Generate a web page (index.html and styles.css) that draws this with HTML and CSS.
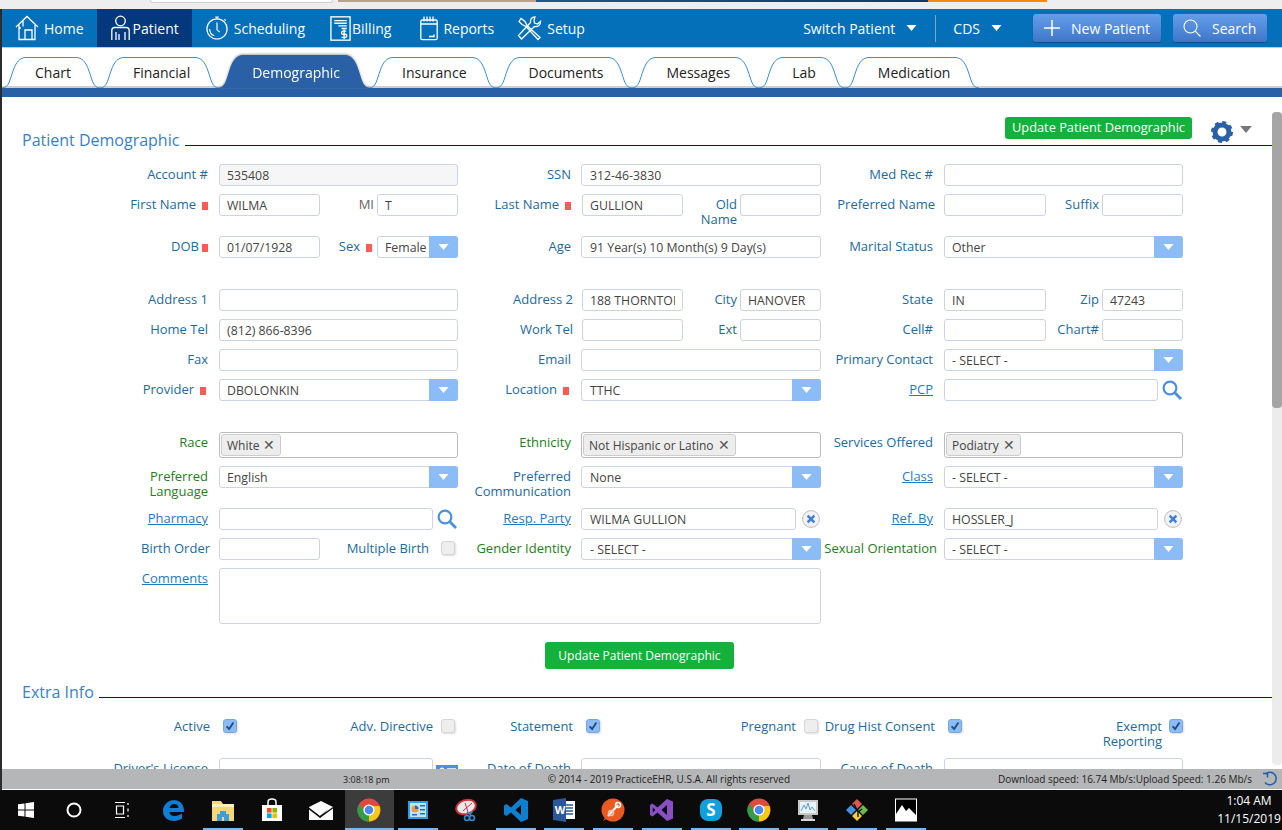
FILE: index.html
```html
<!DOCTYPE html>
<html lang="en">
<head>
<meta charset="utf-8">
<title>Patient Demographic</title>
<link rel="stylesheet" href="styles.css">
</head>
<body>
<svg class="defs" width="0" height="0" aria-hidden="true">
  <symbol id="chrome" viewBox="0 0 24 24">
    <circle cx="12" cy="12" r="11.5" fill="#dd4b3e"/>
    <path d="M12 12 2 18A11.5 11.5 0 0 1 2.2 6L7 13Z" fill="#2f9e48"/>
    <path d="M12 12 2 18A11.5 11.5 0 0 0 12 23.5L17 14Z" fill="#2f9e48"/>
    <path d="M12 12 12 23.5A11.5 11.5 0 0 0 22.5 8H13Z" fill="#fbc813"/>
    <circle cx="12" cy="12" r="5.6" fill="#fff"/>
    <circle cx="12" cy="12" r="4.3" fill="#4a8af0"/>
  </symbol>
  <symbol id="caret" viewBox="0 0 10 6"><path d="M0 0h10L5 6Z"/></symbol>
  <symbol id="search" viewBox="0 0 20 20"><circle cx="8" cy="8" r="6.4" fill="none" stroke="currentColor" stroke-width="2.2"/><path d="M12.6 12.6 19 19" stroke="currentColor" stroke-width="2.8" fill="none"/></symbol>
  <symbol id="search-thin" viewBox="0 0 18 18"><circle cx="7.500" cy="7.500" r="6.500" fill="none" stroke="currentColor" stroke-width="1.100"/><path d="M12.200 12.200 17.500 17.500" stroke="currentColor" stroke-width="1.100" fill="none"/></symbol>
  <symbol id="clear" viewBox="0 0 18 18"><circle cx="9" cy="9" r="8.4" fill="#f2f2f2" stroke="#bdbdbd"/><path d="M5.600 5.600l6.800 6.800M12.400 5.600l-6.800 6.800" stroke="#3d7fd8" stroke-width="2.400" fill="none"/></symbol>
  <symbol id="capl" viewBox="0 0 24 31" preserveAspectRatio="none"><path d="M0 31C7 31 8 22 11 14 14 5 18 .5 24 .5V31Z" fill="var(--tab-fill)"/><path d="M0 31C7 31 8 22 11 14 14 5 18 .5 24 .5" fill="none" stroke="var(--tab-line)"/></symbol>
  <symbol id="capr" viewBox="0 0 24 31" preserveAspectRatio="none"><path d="M24 31C17 31 16 22 13 14 10 5 6 .5 0 .5V31Z" fill="var(--tab-fill)"/><path d="M24 31C17 31 16 22 13 14 10 5 6 .5 0 .5" fill="none" stroke="var(--tab-line)"/></symbol>
</svg>

<div class="window">
  <div class="chrome-strip">
    <span class="strip-a"></span><span class="strip-box"></span><span class="strip-b"></span><span class="strip-photo"></span><span class="strip-navy"></span><span class="strip-orange"></span><span class="strip-c"></span>
  </div>

  <nav class="nav">
    <a class="nav-item nav-home">
      <svg class="nav-ico ico-home" viewBox="0 0 24 26"><path d="M1 12 12 1.5 23 12M4 10v14.5h16V10M10 24.5V15h7v9.5M8 6v5.5M5 14v-2"/></svg>Home</a>
    <a class="nav-item nav-patient is-current">
      <svg class="nav-ico ico-patient" viewBox="0 0 19 26"><circle cx="9.5" cy="6" r="4.8"/><path d="M.8 25V15.5q0-3 3-3h11.4q3 0 3 3V25M5 25v-8M14 25v-8M8 25v-6"/></svg>Patient</a>
    <a class="nav-item nav-sched">
      <svg class="nav-ico ico-clock" viewBox="0 0 24 26"><circle cx="12" cy="14" r="11"/><path d="M12 7v8l3 2.5M10 1h4M12 1v2M20 3.5l1.500 1.500M4 14a8 8 0 0 0 5 7.500"/></svg>Scheduling</a>
    <a class="nav-item nav-bill">
      <svg class="nav-ico ico-bill" viewBox="0 0 20 24"><rect x=".8" y=".8" width="18.400" height="22.400"/><path d="M4 4.500h12M4 7h12M8 9.500h8M11 12h5M15.500 14.500h-3q-1.500 0-1.500 1.500t1.500 1.500h2q1.500 0 1.500 1.500t-1.500 1.500h-3.500M13.500 13v9"/></svg>Billing</a>
    <a class="nav-item nav-rep">
      <svg class="nav-ico ico-rep" viewBox="0 0 18 25"><rect x=".8" y="4.500" width="16.400" height="19.700" rx="1.500"/><path d="M.8 8.500h16.400M4 1v5M7 1v5M10 1v5M13 1v5M9 21h5v-2"/></svg>Reports</a>
    <a class="nav-item nav-set">
      <svg class="nav-ico ico-set" viewBox="0 0 25 25"><path d="M2 6l2-3 4 3 2 4 13 12-2 2-12-13-4-2ZM18 1.500q-5 0-4.500 5.500L1.500 20l3 3.500L17.500 11q6 .5 6-5l-3 2.500-3-1L17 4.500Z"/></svg>Setup</a>
    <div class="nav-right">
      <a class="nav-menu">Switch Patient<svg class="nav-caret"><use href="#caret"/></svg></a>
      <span class="nav-divider"></span>
      <a class="nav-menu nav-cds">CDS<svg class="nav-caret"><use href="#caret"/></svg></a>
      <a class="nav-btn btn-new"><svg class="btn-plus" viewBox="0 0 16 16"><path d="M8 0v16M0 8h16"/></svg>New Patient</a>
      <a class="nav-btn btn-search"><svg class="btn-mag"><use href="#search-thin"/></svg>Search</a>
    </div>
  </nav>

  <div class="tabs">
    <a class="tab"><svg class="cap"><use href="#capl"/></svg><span class="tab-label">Chart</span><svg class="cap"><use href="#capr"/></svg></a>
    <a class="tab"><svg class="cap"><use href="#capl"/></svg><span class="tab-label">Financial</span><svg class="cap"><use href="#capr"/></svg></a>
    <a class="tab tab-active"><svg class="cap"><use href="#capl"/></svg><span class="tab-label">Demographic</span><svg class="cap"><use href="#capr"/></svg></a>
    <a class="tab"><svg class="cap"><use href="#capl"/></svg><span class="tab-label">Insurance</span><svg class="cap"><use href="#capr"/></svg></a>
    <a class="tab"><svg class="cap"><use href="#capl"/></svg><span class="tab-label">Documents</span><svg class="cap"><use href="#capr"/></svg></a>
    <a class="tab tab-nudge"><svg class="cap"><use href="#capl"/></svg><span class="tab-label">Messages</span><svg class="cap"><use href="#capr"/></svg></a>
    <a class="tab"><svg class="cap"><use href="#capl"/></svg><span class="tab-label">Lab</span><svg class="cap"><use href="#capr"/></svg></a>
    <a class="tab"><svg class="cap"><use href="#capl"/></svg><span class="tab-label">Medication</span><svg class="cap"><use href="#capr"/></svg></a>
  </div>
  <div class="band"></div>

  <div class="main">
    <div class="content">
      <div class="head head-top">
        <h2 class="head-title">Patient Demographic</h2>
        <div class="head-rule">
          <a class="btn-green btn-small">Update Patient Demographic</a>
          <svg class="gear" viewBox="0 0 22 22"><circle cx="11" cy="11" r="7" fill="none" stroke="#2a60a6" stroke-width="5"/><circle cx="11" cy="11" r="9.500" fill="none" stroke="#2a60a6" stroke-width="3" stroke-dasharray="3.800 3.660"/></svg>
          <svg class="gear-caret"><use href="#caret"/></svg>
        </div>
      </div>

      <div class="row">
        <label class="l">Account #</label><div class="field is-disabled"><span class="val">535408</span></div>
        <label class="l">SSN</label><div class="field"><span class="val">312-46-3830</span></div>
        <label class="l">Med Rec #</label><div class="field"></div>
      </div>

      <div class="row row-tall">
        <label class="l">First Name<i class="req req-wide"></i></label>
        <div class="split"><div class="field"><span class="val">WILMA</span></div><label class="sl sl-muted">MI</label><div class="field"><span class="val">T</span></div></div>
        <label class="l">Last Name<i class="req req-wide"></i></label>
        <div class="split split-mid"><div class="field"><span class="val">GULLION</span></div><label class="sl">Old Name</label><div class="field"></div></div>
        <label class="l l-tight">Preferred Name</label>
        <div class="split"><div class="field"></div><label class="sl">Suffix</label><div class="field"></div></div>
      </div>

      <div class="row row-end">
        <label class="l">DOB<i class="req"></i></label>
        <div class="split"><div class="field"><span class="val">01/07/1928</span></div><label class="sl sl-req">Sex<i class="req req-wide"></i></label><div class="field select"><span class="val">Female</span><span class="arrow"><svg><use href="#caret"/></svg></span></div></div>
        <label class="l">Age</label><div class="field"><span class="val">91 Year(s) 10 Month(s) 9 Day(s)</span></div>
        <label class="l">Marital Status</label><div class="field select"><span class="val">Other</span><span class="arrow"><svg><use href="#caret"/></svg></span></div>
      </div>

      <div class="row">
        <label class="l">Address 1</label><div class="field"></div>
        <label class="l l-tight">Address 2</label>
        <div class="split split-mid"><div class="field"><span class="val">188 THORNTON</span></div><label class="sl">City</label><div class="field"><span class="val">HANOVER</span></div></div>
        <label class="l">State</label>
        <div class="split"><div class="field"><span class="val">IN</span></div><label class="sl">Zip</label><div class="field"><span class="val">47243</span></div></div>
      </div>

      <div class="row">
        <label class="l">Home Tel</label><div class="field"><span class="val">(812) 866-8396</span></div>
        <label class="l l-tight">Work Tel</label>
        <div class="split split-mid"><div class="field"></div><label class="sl">Ext</label><div class="field"></div></div>
        <label class="l">Cell#</label>
        <div class="split"><div class="field"></div><label class="sl">Chart#</label><div class="field"></div></div>
      </div>

      <div class="row">
        <label class="l">Fax</label><div class="field"></div>
        <label class="l">Email</label><div class="field"></div>
        <label class="l">Primary Contact</label><div class="field select"><span class="val">- SELECT -</span><span class="arrow"><svg><use href="#caret"/></svg></span></div>
      </div>

      <div class="row row-end">
        <label class="l">Provider<i class="req req-wide req-in"></i></label><div class="field select"><span class="val">DBOLONKIN</span><span class="arrow"><svg><use href="#caret"/></svg></span></div>
        <label class="l">Location<i class="req req-wide req-in"></i></label><div class="field select"><span class="val">TTHC</span><span class="arrow"><svg><use href="#caret"/></svg></span></div>
        <label class="l"><a class="lnk">PCP</a></label>
        <div class="with-action"><div class="field"></div><svg class="act act-search"><use href="#search"/></svg></div>
      </div>

      <div class="row">
        <label class="l green">Race</label><div class="field multi"><span class="tag">White<span class="tag-x">✕</span></span></div>
        <label class="l green">Ethnicity</label><div class="field multi"><span class="tag">Not Hispanic or Latino<span class="tag-x">✕</span></span></div>
        <label class="l">Services Offered</label><div class="field multi"><span class="tag">Podiatry<span class="tag-x">✕</span></span></div>
      </div>

      <div class="row row-tall">
        <label class="l green">Preferred<br>Language</label><div class="field select"><span class="val">English</span><span class="arrow"><svg><use href="#caret"/></svg></span></div>
        <label class="l">Preferred<br>Communication</label><div class="field select"><span class="val">None</span><span class="arrow"><svg><use href="#caret"/></svg></span></div>
        <label class="l"><a class="lnk">Class</a></label><div class="field select"><span class="val">- SELECT -</span><span class="arrow"><svg><use href="#caret"/></svg></span></div>
      </div>

      <div class="row">
        <label class="l"><a class="lnk">Pharmacy</a></label>
        <div class="with-action"><div class="field"></div><svg class="act act-search"><use href="#search"/></svg></div>
        <label class="l"><a class="lnk">Resp. Party</a></label>
        <div class="with-action"><div class="field"><span class="val">WILMA GULLION</span></div><svg class="act act-clear"><use href="#clear"/></svg></div>
        <label class="l"><a class="lnk">Ref. By</a></label>
        <div class="with-action"><div class="field"><span class="val">HOSSLER_J</span></div><svg class="act act-clear"><use href="#clear"/></svg></div>
      </div>

      <div class="row">
        <label class="l l-tight">Birth Order</label>
        <div class="split split-check"><div class="field"></div><label class="sl">Multiple Birth</label><span class="check"></span></div>
        <label class="l green">Gender Identity</label><div class="field select"><span class="val">- SELECT -</span><span class="arrow"><svg><use href="#caret"/></svg></span></div>
        <label class="l green l-flush">Sexual Orientation</label><div class="field select"><span class="val">- SELECT -</span><span class="arrow"><svg><use href="#caret"/></svg></span></div>
      </div>

      <div class="row row-last">
        <label class="l"><a class="lnk">Comments</a></label>
        <div class="field textarea"></div>
      </div>

      <div class="actions"><a class="btn-green btn-big">Update Patient Demographic</a></div>

      <div class="head head-extra">
        <h2 class="head-title">Extra Info</h2>
        <div class="head-rule"></div>
      </div>

      <div class="row row-check">
        <label class="l l-check">Active</label>
        <div class="split-flags"><span class="check is-on"><svg viewBox="0 0 14 14"><path d="M3 7.500 6 10.500 11 3"/></svg></span><label class="sl">Adv. Directive</label><span class="check"></span></div>
        <label class="l l-check">Statement</label>
        <div class="split-flags"><span class="check is-on"><svg viewBox="0 0 14 14"><path d="M3 7.500 6 10.500 11 3"/></svg></span><label class="sl">Pregnant</label><span class="check"></span></div>
        <label class="l l-check">Drug Hist Consent</label>
        <div class="split-flags flags-end"><span class="check is-on"><svg viewBox="0 0 14 14"><path d="M3 7.500 6 10.500 11 3"/></svg></span><label class="sl">Exempt<br>Reporting</label><span class="check is-on"><svg viewBox="0 0 14 14"><path d="M3 7.500 6 10.500 11 3"/></svg></span></div>
      </div>

      <div class="row">
        <label class="l">Driver's License</label>
        <div class="with-action"><div class="field"></div><svg class="act act-id" viewBox="0 0 22 14"><rect width="22" height="14" fill="#4a90e2"/><circle cx="6" cy="5" r="2.500" fill="#fff"/><path d="M11 4h9M11 8h9" stroke="#fff" stroke-width="1.500"/></svg></div>
        <label class="l">Date of Death</label><div class="field"></div>
        <label class="l">Cause of Death</label><div class="field"></div>
      </div>
    </div>
    <div class="scrollbar"><div class="scroll-thumb"></div></div>
  </div>

  <footer class="status">
    <span class="st-time">3:08:18 pm</span>
    <span class="st-copy">© 2014 - 2019 PracticeEHR, U.S.A. All rights reserved</span>
    <span class="st-speed">Download speed: 16.74 Mb/s:Upload Speed: 1.26 Mb/s</span>
    <svg class="st-refresh" viewBox="0 0 16 16"><path d="M3.500 3A6.300 6.300 0 1 1 3 11.500"/><path d="M1 2.500h4.500V6.500" /></svg>
  </footer>
</div>

<div class="taskbar">
  <div class="tb-sys">
    <span class="tb-item"><svg viewBox="0 0 16 16" class="tb-16"><path d="M0 2.300 6.500 1.400V7.500H0ZM7.500 1.200 16 0V7.500H7.500ZM0 8.500H6.500V14.600L0 13.700ZM7.500 8.500H16V16L7.500 14.800Z" fill="#fff"/></svg></span>
    <span class="tb-item"><svg viewBox="0 0 16 16" class="tb-16"><circle cx="8" cy="8" r="6.500" fill="none" stroke="#fff" stroke-width="2"/></svg></span>
    <span class="tb-item"><svg viewBox="0 0 16 16" class="tb-16"><path d="M1 .5h10M1 15.500h10M2.500 4h7v8h-7ZM14 1v2M14 6.500v3M14 13v2" fill="none" stroke="#fff" stroke-width="1.200"/></svg></span>
  </div>
  <div class="tb-apps">
    <span class="tb-item"><svg viewBox="0 0 24 24" class="tb-24"><path d="M12.500 2C5 2 1 8 1 13c0 7 6 10 11 10 3 0 6-1 8-2.500v-5c-2 1.500-5 2.500-7.500 2.500-3 0-5-1.500-5-4h14.500c.7-7-4-12-10-12ZM7.500 10c.5-2.500 2.300-4 5-4 2.500 0 4 1.500 4 4Z" fill="#0d7fd6"/></svg></span>
    <span class="tb-item is-run"><svg viewBox="0 0 24 24" class="tb-24"><path d="M1 3h9l2 3h11v17H1Z" fill="#f6d777"/><path d="M1 6h22v3H1Z" fill="#fff2b8"/><path d="M6 23v-7h3v-3h6v3h3v7h-5v-4h-2v4Z" fill="#3aa0dc"/></svg></span>
    <span class="tb-item"><svg viewBox="0 0 24 24" class="tb-24"><path d="M2 7h20v16H2Z" fill="#fff"/><path d="M8 8V4q0-3 4-3t4 3v4" fill="none" stroke="#fff" stroke-width="1.500"/><path d="M7 10h4.600v4.600H7Z" fill="#f25022"/><path d="M12.400 10H17v4.600h-4.600Z" fill="#7fba00"/><path d="M7 15.400h4.600V20H7Z" fill="#00a4ef"/><path d="M12.400 15.400H17V20h-4.600Z" fill="#ffb900"/></svg></span>
    <span class="tb-item"><svg viewBox="0 0 24 24" class="tb-24"><path d="M0 9 12 3l12 6v13H0Z" fill="#fff"/><path d="M0 9.500 11 18 19 11 13 17 11 20 0 11.500Z" fill="#0b0b0b"/><path d="M11 18 24 9v1.500L11 20Z" fill="#0b0b0b"/></svg></span>
    <span class="tb-item is-run is-active"><svg class="tb-24"><use href="#chrome"/></svg></span>
    <span class="tb-item is-run"><svg viewBox="0 0 24 24" class="tb-24"><path d="M2 3h20v18H2Z" fill="#2e9fe0"/><path d="M4 5h16v14H4Z" fill="#bfe4f7"/><circle cx="9" cy="11" r="3.500" fill="#f0a020"/><path d="M9 11V7.500a3.500 3.500 0 0 1 3.500 3.500Z" fill="#1f6fb8"/><path d="M14 7h5v1.500h-5ZM14 11h5v1.500h-5ZM14 15h5v1.500h-5ZM6 16h5v1.500H6Z" fill="#1f6fb8"/></svg></span>
    <span class="tb-item"><svg viewBox="0 0 24 24" class="tb-24"><ellipse cx="11" cy="9" rx="10" ry="7" fill="#e9e9e9" stroke="#c9333a" stroke-width="2" transform="rotate(-18 11 9)"/><path d="M10 5l3 9M17 5 8 13" stroke="#c9333a" stroke-width="1" fill="none"/><path d="M12 14l4 3M17 13l-2 4" stroke="#2f8fd8" stroke-width="1.500" fill="none"/><circle cx="17" cy="20" r="2.500" fill="none" stroke="#2f8fd8" stroke-width="1.500"/><circle cx="12" cy="20" r="2.500" fill="none" stroke="#2f8fd8" stroke-width="1.500"/></svg></span>
    <span class="tb-item is-run"><svg viewBox="0 0 24 24" class="tb-24"><path d="M17 0 24 3v18l-7 3-10-9.500L2.500 18 0 16.500v-9L2.500 6 7 9.500ZM17 7l-5.500 5 5.500 5Z" fill="#0f7fd0"/></svg></span>
    <span class="tb-item is-run"><svg viewBox="0 0 24 24" class="tb-24"><path d="M8 3h15v18H8Z" fill="#fff"/><path d="M14 7h7M14 10h7M14 13h7M14 16h7" stroke="#2b579a" stroke-width="1.500"/><path d="M1 2l13-2v24L1 22Z" fill="#2b579a"/><text x="2.800" y="16" class="tb-word">W</text></svg></span>
    <span class="tb-item is-run"><svg viewBox="0 0 24 24" class="tb-24"><circle cx="12" cy="12" r="11.500" fill="#ea5a20"/><path d="M2 23l3-5 2 2Z" fill="#ea5a20"/><path d="M7 18 17 7" stroke="#fff" stroke-width="2"/><circle cx="17" cy="7" r="2.500" fill="none" stroke="#fff" stroke-width="1.500"/><circle cx="10" cy="15" r="2.500" fill="none" stroke="#f6c7ae" stroke-width="1.500"/></svg></span>
    <span class="tb-item is-run"><svg viewBox="0 0 24 24" class="tb-24"><path d="M17 1 23 3.500v17L17 23 7.500 14.500 2.500 18.500 0 17V7l2.500-1.500 5 4ZM17 7l-5.500 5 5.500 5ZM2.800 9.500v5L5.300 12Z" fill="#8a4fc4"/></svg></span>
    <span class="tb-item is-run"><svg viewBox="0 0 24 24" class="tb-24"><rect x="1" y="1" width="22" height="22" rx="8" fill="#129fdd"/><text x="12" y="18" class="tb-skype">S</text></svg></span>
    <span class="tb-item is-run"><svg class="tb-24"><use href="#chrome"/></svg></span>
    <span class="tb-item is-run"><svg viewBox="0 0 24 24" class="tb-24"><path d="M2 2h20v15H2Z" fill="#c8c8c8"/><path d="M4 4h16v11H4Z" fill="#e8f2f8"/><path d="M5 13l3-6 2 4 2-6 2 7 2-3 3 4" fill="none" stroke="#5aa0d8"/><path d="M8 17h8l1 4H7Z" fill="#9a9a9a"/><path d="M5 21h14v2H5Z" fill="#d6d6d6"/></svg></span>
    <span class="tb-item is-run"><svg viewBox="0 0 24 24" class="tb-24"><path d="M12 1 17 6 12 11 7 6Z" fill="#e2574c"/><path d="M6 7l5 5-5 5-5-5Z" fill="#4a90e2"/><path d="M18 7l5 5-5 5-5-5Z" fill="#6cbb4a"/><path d="M12 13l5 5-5 5-5-5Z" fill="#f4d03f"/><path d="M9 6l4 8 0 5M13 14l4-3" stroke="#111" stroke-width="1.400" fill="none"/></svg></span>
    <span class="tb-item is-run"><svg viewBox="0 0 22 24" class="tb-24"><rect x=".5" y="1" width="21" height="22" fill="#000" stroke="#fff"/><path d="M1 16 7 7l4 6 3-3 7 7v6H1Z" fill="#fff"/></svg></span>
  </div>
  <div class="tb-clock"><span>1:04 AM</span><span>11/15/2019</span></div>
</div>
</body>
</html>
```

FILE: styles.css
```css
* { box-sizing: border-box; }
html, body { margin: 0; height: 100%; }
body {
  width: 1282px; height: 830px; overflow: hidden;
  font-family: "Open Sans", "Liberation Sans", sans-serif;
  font-size: 13px; color: #444; background: #0b0b0b;
  display: flex; flex-direction: column;
}
a { cursor: pointer; }
.defs { display: block; height: 0; }

.window {
  height: 790px; flex: none; display: flex; flex-direction: column;
  padding-left: 2px; background: #2c2c2c;
}

/* leftover of the browser chrome */
.chrome-strip { height: 9px; flex: none; background: #eeeeef; display: flex; align-items: flex-start; margin-left: -2px; }
.chrome-strip span { display: block; height: 2px; }
.strip-a { width: 150px; }
.strip-box { width: 183px; height: 3px !important; background: #fff; border: 1px solid #d0d0d0; border-top: 0; border-radius: 0 0 4px 4px; }
.strip-b { width: 5px; }
.strip-photo { width: 198px; background: #b9a38d; }
.strip-navy { width: 392px; background: linear-gradient(90deg, #1b5a8a, #0d3a66); }
.strip-orange { width: 119px; background: #f58a0b; }
.strip-c { flex: 1; }

/* nav */
.nav {
  height: 39px; flex: none; display: flex; background: #0370b9;
  border-bottom: 1px solid #c9c9c9; color: #fff; font-size: 14px;
}
.nav-item { display: flex; align-items: center; gap: 5px; padding: 0 13px; color: #fff; }
.is-current { background: #03397c; }
.nav-ico { fill: none; stroke: #fff; stroke-width: 1.300; height: 26px; flex: none; }
.ico-home { width: 24px; }
.ico-patient { width: 19px; margin-left: 1px; margin-right: -2px; }
.nav-sched { padding-left: 14px; }
.ico-clock { width: 22px; margin-right: 1px; }
.nav-bill { padding-left: 12px; gap: 1px; }
.ico-bill { width: 21px; height: 25px; }
.nav-rep { padding-left: 16px; }
.ico-rep { width: 18px; }
.nav-set { padding-left: 10px; }
.ico-set { width: 25px; }
.nav-right { margin-left: auto; display: flex; align-items: center; padding-right: 15px; }
.nav-menu { display: flex; align-items: center; }
.nav-caret { width: 11px; height: 6px; margin-left: 11px; fill: #fff; }
.nav-divider { width: 1px; height: 27px; background: #6fa9d4; margin: 0 17px 0 18px; }
.nav-cds { margin-right: 31px; }
.nav-btn {
  height: 28px; display: flex; align-items: center; border-radius: 3px;
  background: linear-gradient(#659fea, #3d76c8); box-shadow: 0 1px 1px #0b4f8a; color: #fff;
}
.btn-new { width: 128px; padding-left: 11px; margin-right: 12px; }
.btn-plus { width: 16px; height: 16px; stroke: #fff; stroke-width: 1.500; fill: none; margin-right: 11px; }
.btn-search { width: 94px; padding-left: 10px; }
.btn-mag { width: 18px; height: 18px; color: #fff; margin-right: 11px; }

/* tabs */
.tabs {
  --tab-line: #3b8ed0;
  --tab-fill: transparent;
  height: 40px; flex: none; padding-top: 9px; display: flex; background: #fff;
  box-shadow: inset 0 -2px 0 #cfcfcf; font-size: 14px; color: #222;
}
.tab { display: flex; height: 31px; }
.cap { width: 24px; height: 100%; flex: none; }
.tab-label {
  color: #222; line-height: 30px; padding: 0 5px 0 9px;
  border-top: 1px solid var(--tab-line);
}
.tab-nudge .tab-label { padding-left: 10px; }
.tab-active { --tab-line: #2a60a6; --tab-fill: #2a60a6; height: 33px; margin-top: -2px; filter: drop-shadow(0 -1px 1px #aaa); }
.tab-active .tab-label { background: #2a60a6; color: #fff; line-height: 33px; padding: 0 5px 0 9px; }
.band { height: 9px; flex: none; background: #2a60a6; }

/* main */
.main { flex: 1; min-height: 0; display: flex; background: #fff; overflow: hidden; }
.content { flex: 1; min-width: 0; overflow: hidden; }
.scrollbar { width: 10px; flex: none; margin-top: 15px; height: 653px; border-radius: 4px; background: #ececec; }
.scroll-thumb { height: 296px; background: #a5a5a5; border-radius: 4px; }

.head { display: flex; padding-left: 20px; }
.head-top { margin-top: 20px; margin-bottom: 18px; }
.head-extra { margin-top: 12px; margin-bottom: 17px; }
.head-title {
  margin: 0 5.500px -5px 0; font-size: 16px; line-height: 22px; font-weight: 400; color: #3a7fc8;
  align-self: flex-end; white-space: nowrap;
}
.head-rule { flex: 1; display: flex; align-items: center; justify-content: flex-end; border-bottom: 1px solid #0000cd; padding-bottom: 6px; min-height: 1px; }
.btn-green { background: #14b13c; color: #fff; border-radius: 3px; display: flex; align-items: center; justify-content: center; padding-bottom: 1px; }
.btn-small { width: 187px; height: 22px; font-size: 12.800px; padding-bottom: 2px; }
.gear { width: 22px; height: 22px; margin-left: 19px; margin-top: 4px; margin-bottom: -4px; }
.gear-caret { width: 12px; height: 7px; margin: 3px 20px 0 7px; fill: #777; }

/* form */
.row {
  display: grid; grid-template-columns: 123px 239px 123px 240px 123px 239px;
  padding-left: 94px; margin-bottom: 8px; align-items: start; line-height: 15px;
}
.row-tall { min-height: 34px; }
.row-end { margin-bottom: 31px; }
.row-last { margin-bottom: 18px; }
.row-check { min-height: 35px; }
.l { display: block; text-align: right; padding: 3px 10px 0 0; color: #1c6a9e; white-space: nowrap; }
.row > .l:nth-child(4n+1) { margin-right: 1px; }
.l-tight { padding-right: 8px; }
.l-flush { padding-right: 6px; }
.l-check { padding: 4px 9px 0 0; }
.row > .l-check:nth-child(4n+1) { margin-right: 0; }
.row > .l-check:nth-child(3) { padding-right: 8px; }
.green { color: #1f7d1a; }
.lnk { color: #1f7ac0; text-decoration: underline; }
.req { display: inline-block; width: 6px; height: 8px; background: #ff5a55; margin-left: 3px; vertical-align: -0.5px; }
.req-wide { margin-left: 6px; }
.req-in { margin-right: 2px; }

.field {
  height: 22px; display: flex; align-items: center; background: #fff;
  border: 1px solid #ccd3e2; border-radius: 3px; padding-left: 7px; min-width: 0;
  color: #444; white-space: nowrap; font-size: 12.300px;
}
.row > .field:nth-child(4) { padding-left: 8px; }
.val { flex: 1; min-width: 0; overflow: hidden; margin-right: 7px; }
.is-disabled { background: #f6f6f6; }
.select { padding-right: 0; }
.arrow { width: 29px; height: 22px; margin: 0 -1px 0 0; flex: none; background: #8cbcf5; display: flex; align-items: center; justify-content: center; border-radius: 0 3px 3px 0; }
.arrow svg { width: 11px; height: 6px; fill: #fff; }
.select .val { margin-right: 0; }
.multi { height: 26px; border-color: #bbb; font-size: 12px; }
.row > .multi:nth-child(n) { padding-left: 1px; }
.tag {
  height: 22px; display: flex; align-items: center; padding: 0 5px; background: #ededed;
  border: 1px solid #ccc; border-radius: 3px; color: #444;
}
.tag-x { margin-left: 4px; font-size: 14px; line-height: 14px; color: #555; }
.textarea { grid-column: 2 / span 3; height: 56px; }

.split { display: grid; grid-template-columns: 101px 1fr 81px; }
.row > .split:nth-child(6) { grid-template-columns: 102px 1fr 81px; }
.split-mid { margin-left: 1px; }
.sl { display: block; text-align: right; padding: 3px 3px 0 0; color: #1c6a9e; white-space: normal; }
.sl-muted { color: #666; }
.sl-req { padding-right: 5px; }
.split-check { grid-template-columns: 101px 1fr 14px; margin-right: 3px; }
.split-check .sl { padding-right: 12px; white-space: nowrap; }
.split-check .check { margin-top: 3px; }
.split-flags { display: grid; grid-template-columns: 14px 1fr 14px; padding: 4px 3px 0 4px; }
.row > .split-flags:nth-child(4) { padding-left: 5px; }
.split-flags .sl { padding: 0 8px 0 0; white-space: nowrap; }
.flags-end { padding-right: 0; }
.flags-end .sl { padding-right: 7px; }

.check { display: block; width: 14px; height: 14px; border-radius: 3px; background: #eee; border: 1px solid #d6d6d6; box-shadow: 1px 1px 2px #ddd; }
.check svg { display: block; width: 12px; height: 12px; fill: none; stroke: #1d4f80; stroke-width: 2.200; }
.is-on { background: #8cbcf5; border-color: #7ba7d8; }

.with-action { display: flex; align-items: flex-start; justify-content: space-between; }
.with-action .field { width: 214px; }
.row > .with-action:nth-child(4) .field { width: 215px; padding-left: 8px; }
.act { flex: none; }
.act-search { width: 20px; height: 20px; color: #4a90e2; margin-top: 1px; margin-right: 1px; }
.act-clear { width: 18px; height: 18px; margin-top: 2px; margin-right: 1px; }
.act-id { width: 22px; height: 14px; margin-top: 7px; }
.actions { display: flex; justify-content: center; padding-left: 5px; }
.btn-big { width: 189px; height: 27px; font-size: 12px; }

/* status */
.status {
  height: 21px; flex: none; display: flex; align-items: center; background: #b5b6b7;
  border-bottom: 1px solid #fff; padding-left: 341px; font-size: 10px; color: #222;
}
.st-time { font-size: 9px; }
.st-copy { margin-left: 158px; }
.st-speed { margin-left: auto; }
.st-refresh { width: 16px; height: 16px; margin: 0 4px 0 10px; fill: none; stroke: #1f5fa8; stroke-width: 1.500; }

/* taskbar */
.taskbar { height: 40px; flex: none; display: flex; color: #fff; background: #0b0b0b; padding-left: 2px; }
.tb-sys { display: flex; width: 148px; }
.tb-sys .tb-item { width: 48px; }
.tb-apps { display: flex; }
.tb-item { width: 48.750px; height: 40px; display: flex; align-items: center; justify-content: center; }
.tb-16 { width: 16px; height: 16px; }
.tb-24 { width: 24px; height: 24px; }
.is-run { background: linear-gradient(#76b9ed, #76b9ed) center bottom / 40px 2px no-repeat; }
.is-active { background: linear-gradient(#76b9ed, #76b9ed) center bottom / 100% 2px no-repeat, #3c3c3c; }
.tb-word { font: 700 11px "Open Sans", sans-serif; fill: #fff; }
.tb-skype { font: 700 17px "Open Sans", sans-serif; fill: #fff; text-anchor: middle; }
.tb-clock { margin-left: auto; width: 62px; margin-right: 2px; display: flex; flex-direction: column; align-items: center; justify-content: center; font-size: 12px; line-height: 18px; }
```
